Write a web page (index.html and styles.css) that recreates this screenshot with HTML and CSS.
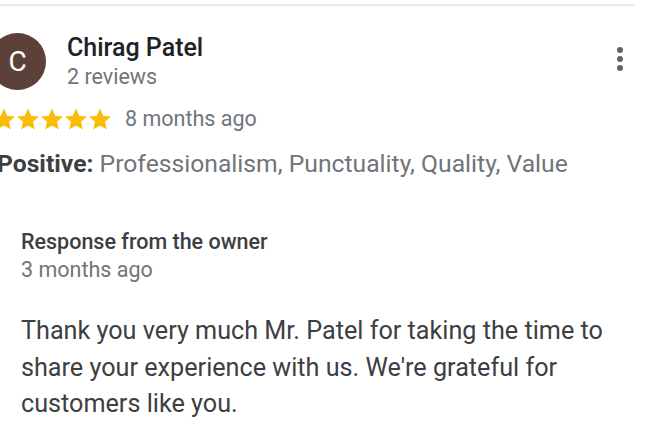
FILE: index.html
```html
<!DOCTYPE html>
<html lang="en">
<head>
    <meta charset="UTF-8">
    <meta name="viewport" content="width=device-width, initial-scale=1.0">
    <title>Review</title>
    <link rel="stylesheet" href="styles.css">
</head>
<body>
    <div class="divider"></div>

    <div class="review">
        <div class="review-head">
            <div class="avatar">C</div>
            <div class="author">
                <div class="author-name">Chirag Patel</div>
                <div class="author-meta">2 reviews</div>
            </div>
            <button class="more" aria-label="More options">
                <svg width="8" height="26" viewBox="0 0 8 26">
                    <circle cx="4" cy="4" r="3" fill="#5f6368"/>
                    <circle cx="4" cy="13" r="3" fill="#5f6368"/>
                    <circle cx="4" cy="22" r="3" fill="#5f6368"/>
                </svg>
            </button>
        </div>

        <div class="rating">
            <div class="stars">
                <svg viewBox="0 0 24 24"><path d="M12 1.5l3.1 7.3 7.9.7-6 5.2 1.8 7.8L12 18.4l-6.8 4.1L7 14.7l-6-5.2 7.9-.7z"/></svg>
                <svg viewBox="0 0 24 24"><path d="M12 1.5l3.1 7.3 7.9.7-6 5.2 1.8 7.8L12 18.4l-6.8 4.1L7 14.7l-6-5.2 7.9-.7z"/></svg>
                <svg viewBox="0 0 24 24"><path d="M12 1.5l3.1 7.3 7.9.7-6 5.2 1.8 7.8L12 18.4l-6.8 4.1L7 14.7l-6-5.2 7.9-.7z"/></svg>
                <svg viewBox="0 0 24 24"><path d="M12 1.5l3.1 7.3 7.9.7-6 5.2 1.8 7.8L12 18.4l-6.8 4.1L7 14.7l-6-5.2 7.9-.7z"/></svg>
                <svg viewBox="0 0 24 24"><path d="M12 1.5l3.1 7.3 7.9.7-6 5.2 1.8 7.8L12 18.4l-6.8 4.1L7 14.7l-6-5.2 7.9-.7z"/></svg>
            </div>
            <span class="date">8 months ago</span>
        </div>

        <p class="highlights"><b>Positive:</b> Professionalism, Punctuality, Quality, Value</p>

        <div class="owner-reply">
            <div class="reply-title">Response from the owner</div>
            <div class="reply-date">3 months ago</div>
            <p class="reply-text">Thank you very much Mr. Patel for taking the time to share your experience with us. We're grateful for customers like you.</p>
        </div>
    </div>
</body>
</html>
```

FILE: styles.css
```css
body {
    margin: 0;
    background: #fff;
    font-family: Roboto, "Noto Sans", Arial, sans-serif;
    color: #3c4043;
    overflow: hidden;
}

.divider {
    height: 2px;
    margin: 4px 15px 0 0;
    background: #ebebeb;
}

.review {
    margin-left: -11px;
    padding-top: 27px;
}

.review-head {
    display: flex;
    align-items: flex-start;
}

.avatar {
    width: 57px;
    height: 57px;
    flex: none;
    border-radius: 50%;
    background: #5d4037;
    color: #fff;
    font-size: 28px;
    line-height: 57px;
    text-align: center;
}

.author {
    margin-left: 21px;
}

.author-name {
    font-size: 25px;
    font-weight: 500;
    line-height: 30px;
    color: #202124;
}

.author-meta {
    font-size: 21.5px;
    line-height: 28px;
    color: #70757a;
}

.more {
    margin-left: auto;
    margin-right: 26px;
    margin-top: 13px;
    padding: 0;
    border: none;
    background: none;
    display: flex;
}

.rating {
    display: flex;
    align-items: center;
    margin-top: 15px;
    padding-left: 3px;
}

.stars {
    display: flex;
}

.stars svg {
    width: 24px;
    height: 24px;
    fill: #fbbc04;
}

.date {
    margin-left: 13px;
    font-size: 21.5px;
    color: #70757a;
}

.highlights {
    margin: 18px 0 0 8px;
    font-size: 24.7px;
    line-height: 30px;
    color: #70757a;
}

.highlights b {
    font-weight: 700;
    color: #3c4043;
}

.owner-reply {
    margin: 49px 0 0 32px;
}

.reply-title {
    font-size: 21.5px;
    font-weight: 500;
    line-height: 28px;
}

.reply-date {
    font-size: 21.5px;
    line-height: 28px;
    color: #70757a;
}

.reply-text {
    margin: 29px 0 0;
    font-size: 25.2px;
    line-height: 36.5px;
}
```
